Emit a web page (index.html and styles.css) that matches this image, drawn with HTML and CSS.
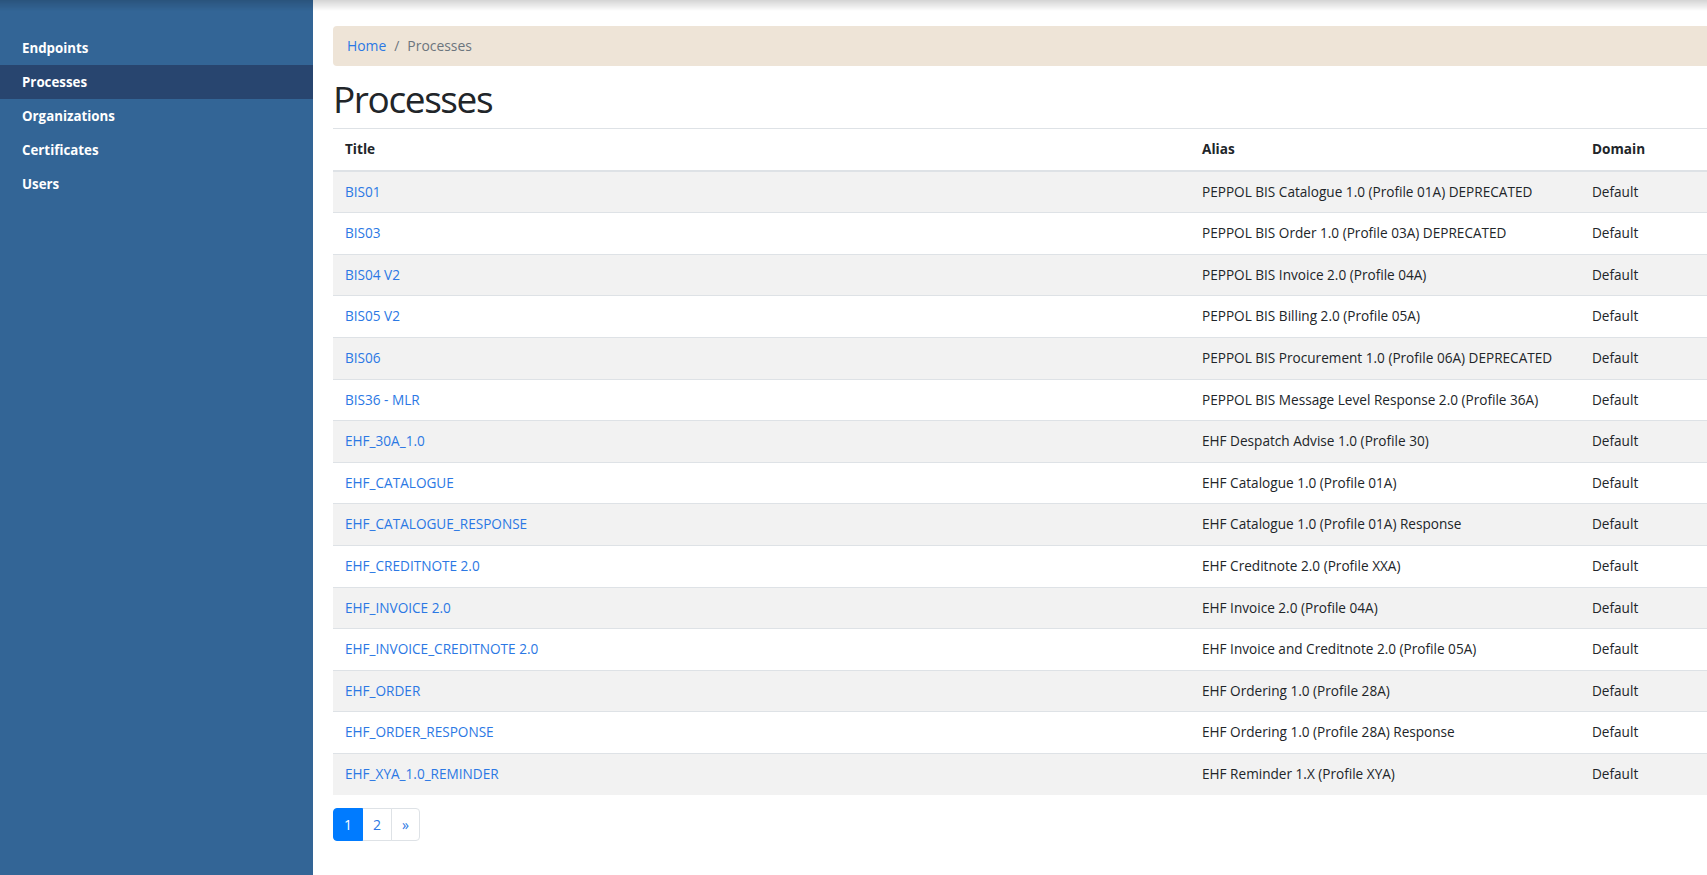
FILE: index.html
```html
<!DOCTYPE html>
<html lang="en">
<head>
<meta charset="utf-8">
<title>Processes</title>
<link rel="stylesheet" href="styles.css">
</head>
<body>
<div class="top-shadow"></div>
<div class="layout">
  <nav class="sidebar">
    <ul class="nav">
      <li><a href="#">Endpoints</a></li>
      <li class="active"><a href="#">Processes</a></li>
      <li><a href="#">Organizations</a></li>
      <li><a href="#">Certificates</a></li>
      <li><a href="#">Users</a></li>
    </ul>
  </nav>
  <main class="main">
    <div class="content">
      <ol class="breadcrumb">
        <li><a href="#">Home</a></li>
        <li class="sep">/</li>
        <li class="current">Processes</li>
      </ol>
      <h1 class="page-title">Processes</h1>
      <table class="table">
        <thead>
          <tr><th class="col-title">Title</th><th class="col-alias">Alias</th><th>Domain</th></tr>
        </thead>
        <tbody>
          <tr><td><a href="#">BIS01</a></td><td>PEPPOL BIS Catalogue 1.0 (Profile 01A) DEPRECATED</td><td>Default</td></tr>
          <tr><td><a href="#">BIS03</a></td><td>PEPPOL BIS Order 1.0 (Profile 03A) DEPRECATED</td><td>Default</td></tr>
          <tr><td><a href="#">BIS04 V2</a></td><td>PEPPOL BIS Invoice 2.0 (Profile 04A)</td><td>Default</td></tr>
          <tr><td><a href="#">BIS05 V2</a></td><td>PEPPOL BIS Billing 2.0 (Profile 05A)</td><td>Default</td></tr>
          <tr><td><a href="#">BIS06</a></td><td>PEPPOL BIS Procurement 1.0 (Profile 06A) DEPRECATED</td><td>Default</td></tr>
          <tr><td><a href="#">BIS36 - MLR</a></td><td>PEPPOL BIS Message Level Response 2.0 (Profile 36A)</td><td>Default</td></tr>
          <tr><td><a href="#">EHF_30A_1.0</a></td><td>EHF Despatch Advise 1.0 (Profile 30)</td><td>Default</td></tr>
          <tr><td><a href="#">EHF_CATALOGUE</a></td><td>EHF Catalogue 1.0 (Profile 01A)</td><td>Default</td></tr>
          <tr><td><a href="#">EHF_CATALOGUE_RESPONSE</a></td><td>EHF Catalogue 1.0 (Profile 01A) Response</td><td>Default</td></tr>
          <tr><td><a href="#">EHF_CREDITNOTE 2.0</a></td><td>EHF Creditnote 2.0 (Profile XXA)</td><td>Default</td></tr>
          <tr><td><a href="#">EHF_INVOICE 2.0</a></td><td>EHF Invoice 2.0 (Profile 04A)</td><td>Default</td></tr>
          <tr><td><a href="#">EHF_INVOICE_CREDITNOTE 2.0</a></td><td>EHF Invoice and Creditnote 2.0 (Profile 05A)</td><td>Default</td></tr>
          <tr><td><a href="#">EHF_ORDER</a></td><td>EHF Ordering 1.0 (Profile 28A)</td><td>Default</td></tr>
          <tr><td><a href="#">EHF_ORDER_RESPONSE</a></td><td>EHF Ordering 1.0 (Profile 28A) Response</td><td>Default</td></tr>
          <tr><td><a href="#">EHF_XYA_1.0_REMINDER</a></td><td>EHF Reminder 1.X (Profile XYA)</td><td>Default</td></tr>
        </tbody>
      </table>
      <ul class="pagination">
        <li class="page active"><a href="#">1</a></li>
        <li class="page"><a href="#">2</a></li>
        <li class="page"><a href="#">&raquo;</a></li>
      </ul>
    </div>
  </main>
</div>
</body>
</html>
```

FILE: styles.css
```css
* { box-sizing: border-box; }

html, body {
  margin: 0;
  padding: 0;
  height: 100%;
}

body {
  font-family: "Open Sans", "Liberation Sans", sans-serif;
  font-size: 14px;
  color: #212529;
  background: #fff;
  overflow: hidden;
}

a { text-decoration: none; color: #2b78e4; }

.top-shadow {
  position: fixed;
  top: 0;
  left: 0;
  right: 0;
  height: 11px;
  background: linear-gradient(to bottom, rgba(0,0,0,0.17), rgba(0,0,0,0));
  pointer-events: none;
  z-index: 10;
}

.layout {
  display: flex;
  height: 100%;
}

.sidebar {
  flex: 0 0 313px;
  width: 313px;
  background: #336596;
  padding-top: 31px;
}

.nav {
  list-style: none;
  margin: 0;
  padding: 0;
}

.nav li a {
  display: block;
  padding: 8px 22px;
  line-height: 18px;
  color: #fff;
  font-weight: 700;
  font-size: 13.3px;
}

.nav li.active a {
  background: #28456f;
}

.main {
  flex: 1 1 auto;
  min-width: 0;
  overflow: hidden;
  padding-left: 20px;
}

.content {
  width: 1420px;
}

.breadcrumb {
  display: flex;
  list-style: none;
  margin: 26px 0 0;
  padding: 9px 14px 10px;
  line-height: 21px;
  background: #eee4d7;
  border-radius: 4px;
  color: #6c757d;
  font-size: 13.9px;
}

.breadcrumb .sep {
  padding: 0 8px;
}

.page-title {
  font-size: 37px;
  font-weight: 400;
  letter-spacing: -1.4px;
  line-height: 48px;
  margin: 9px 0 5px;
  color: #212529;
}

.table {
  width: 100%;
  border-collapse: collapse;
  margin-bottom: 13px;
  font-size: 13.6px;
}

.table th,
.table td {
  padding: 12px 12px;
  line-height: 16.6px;
  text-align: left;
  border-top: 1px solid #dee2e6;
  vertical-align: top;
}

.table th {
  font-weight: 700;
  border-bottom: 2px solid #dee2e6;
}

.col-title { width: 857px; }
.col-alias { width: 390px; }

.table tbody tr:nth-child(odd) {
  background: #f2f2f2;
}

.pagination {
  display: flex;
  list-style: none;
  margin: 0;
  padding: 0;
}

.page a {
  display: block;
  padding: 7px 10px;
  line-height: 17px;
  border: 1px solid #dee2e6;
  margin-left: -1px;
  color: #2b78e4;
  background: #fff;
}

.page:first-child a {
  margin-left: 0;
  border-radius: 4px 0 0 4px;
}

.page:last-child a {
  border-radius: 0 4px 4px 0;
}

.page.active a {
  background: #007bff;
  border-color: #007bff;
  color: #fff;
  position: relative;
  z-index: 1;
}
```
